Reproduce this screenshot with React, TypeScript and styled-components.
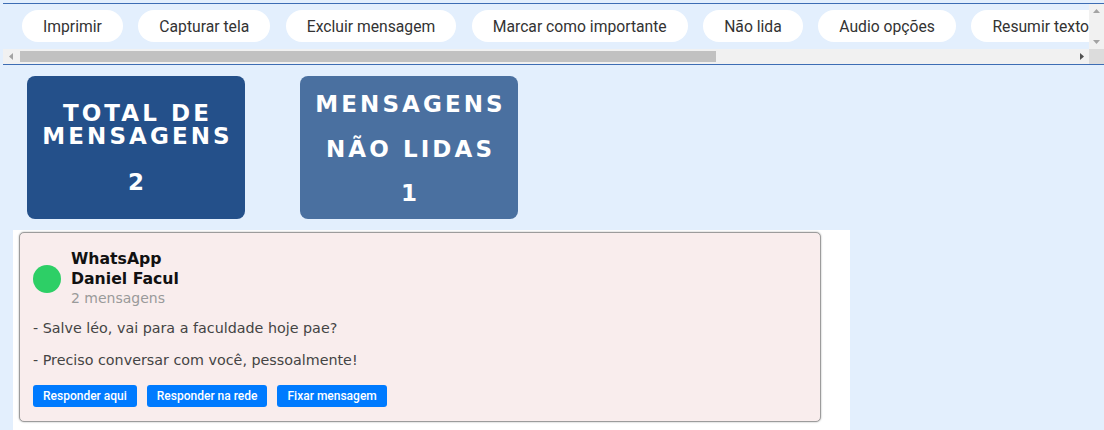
import React from "react";
import styled, { createGlobalStyle } from "styled-components";

const GlobalStyle = createGlobalStyle`
  html, body {
    margin: 0;
    padding: 0;
    background: #e3effd;
  }
  body {
    font-family: "DejaVu Sans", sans-serif;
  }
`;

const Page = styled.div`
  display: flex;
  flex-direction: column;
  min-height: 430px;
`;

/* ---------- toolbar with its (drawn) scrollbars ---------- */

const ToolbarFrame = styled.div`
  margin: 3px 0 0 3px;
  border-top: 1px solid #3d6db4;
  border-bottom: 1px solid #3d6db4;
  display: grid;
  grid-template-columns: 1fr 15px;
  grid-template-rows: 45px 15px;
`;

const Strip = styled.div`
  overflow: hidden;
  display: flex;
  align-items: flex-start;
  gap: 15.5px;
  padding: 6px 19px 0;
`;

const ToolButton = styled.button`
  flex-shrink: 0;
  height: 32px;
  padding: 0 21px;
  border: none;
  border-radius: 16px;
  background: #ffffff;
  color: #333333;
  font-family: Roboto, "Liberation Sans", sans-serif;
  font-size: 15.7px;
  white-space: nowrap;
  cursor: pointer;
`;

const VScroll = styled.div`
  background: #f1f1f1;
  display: flex;
  flex-direction: column;
  justify-content: space-between;
  align-items: center;
  padding: 5px 0;
`;

const HScroll = styled.div`
  background: #f1f1f1;
  display: flex;
  align-items: stretch;
`;

const ArrowCell = styled.div`
  width: 15px;
  flex-shrink: 0;
  display: flex;
  align-items: center;
  justify-content: center;
`;

const Track = styled.div`
  flex: 1;
  padding: 2px 0 2px 2px;
  display: flex;
`;

const Thumb = styled.div`
  background: #c1c1c1;
  height: 100%;
`;

const Corner = styled.div`
  background: #dcdcdc;
`;

type Dir = "up" | "down" | "left" | "right";
const arrowPoints: Record<Dir, string> = {
  up: "0,4 3.5,0 7,4",
  down: "0,0 3.5,4 7,0",
  left: "4,0 0,3.5 4,7",
  right: "0,0 4,3.5 0,7",
};

function Arrow({ dir, color }: { dir: Dir; color: string }) {
  const horiz = dir === "left" || dir === "right";
  return (
    <svg
      width={horiz ? 4 : 7}
      height={horiz ? 7 : 4}
      viewBox={horiz ? "0 0 4 7" : "0 0 7 4"}
    >
      <polygon points={arrowPoints[dir]} fill={color} />
    </svg>
  );
}

/* ---------- stats ---------- */

const StatsRow = styled.div`
  display: flex;
  gap: 55px;
  padding: 11px 0 0 27px;
`;

const StatCard = styled.div<{ $tone: string; $lift: number }>`
  width: 218px;
  height: 143px;
  box-sizing: border-box;
  padding: 0 0 ${(p) => p.$lift}px 3px;
  border-radius: 8px;
  background: ${(p) => p.$tone};
  color: #ffffff;
  display: flex;
  flex-direction: column;
  align-items: center;
  justify-content: center;
  text-align: center;
  font-family: "DejaVu Sans", sans-serif;
  font-weight: bold;
  font-size: 23px;
  letter-spacing: 3.1px;
`;

const StatTitle = styled.div<{ $lh: number }>`
  line-height: ${(p) => p.$lh}px;
`;

const StatValue = styled.div<{ $gap: number }>`
  margin-top: ${(p) => p.$gap}px;
  line-height: 24px;
`;

/* ---------- message panel ---------- */

const Panel = styled.div`
  margin: 11px 0 0 13px;
  width: 831px;
  background: #ffffff;
  padding: 2px 0 12px 6px;
  flex: 1;
`;

const MessageCard = styled.div`
  width: 774px;
  background: #f9eded;
  border: 1px solid #9c9c9c;
  box-shadow: 0 0 2px rgba(0, 0, 0, 0.35);
  border-radius: 5px;
  padding: 16px 13px 14px 13px;
`;

const Header = styled.div`
  display: flex;
  align-items: center;
  gap: 10px;
`;

const Avatar = styled.div`
  width: 28px;
  height: 28px;
  border-radius: 50%;
  background: #2dcf66;
`;

const HeaderText = styled.div`
  display: flex;
  flex-direction: column;
`;

const Strong = styled.div`
  font-weight: bold;
  font-size: 15.7px;
  line-height: 20px;
  color: #111111;
`;

const Muted = styled.div`
  font-size: 14px;
  line-height: 19px;
  color: #9a9a9a;
`;

const Lines = styled.div`
  margin-top: 11px;
  display: flex;
  flex-direction: column;
  gap: 14px;
`;

const Line = styled.p`
  margin: 0;
  font-size: 14.3px;
  line-height: 18px;
  color: #444444;
`;

const Actions = styled.div`
  display: flex;
  gap: 10px;
  margin-top: 16px;
`;

const ActionButton = styled.button`
  height: 22px;
  padding: 0 10px;
  border: none;
  border-radius: 3px;
  background: #007bff;
  color: #ffffff;
  font-family: Roboto, "Liberation Sans", sans-serif;
  font-weight: 500;
  font-size: 12px;
  cursor: pointer;
`;

const tools = [
  "Imprimir",
  "Capturar tela",
  "Excluir mensagem",
  "Marcar como importante",
  "Não lida",
  "Audio opções",
  "Resumir texto",
  "Traduzir",
  "Compartilhar",
  "Encaminhar",
  "Arquivar",
];

export default function App() {
  return (
    <>
      <GlobalStyle />
      <Page>
        <ToolbarFrame>
          <Strip>
            {tools.map((t) => (
              <ToolButton key={t}>{t}</ToolButton>
            ))}
          </Strip>
          <VScroll>
            <Arrow dir="up" color="#a3a3a3" />
            <Arrow dir="down" color="#a3a3a3" />
          </VScroll>
          <HScroll>
            <ArrowCell>
              <Arrow dir="left" color="#a3a3a3" />
            </ArrowCell>
            <Track>
              <Thumb style={{ width: "66%" }} />
            </Track>
            <ArrowCell>
              <Arrow dir="right" color="#505050" />
            </ArrowCell>
          </HScroll>
          <Corner />
        </ToolbarFrame>
        <StatsRow>
          <StatCard $tone="#24508a" $lift={0}>
            <StatTitle $lh={23}>
              TOTAL DE
              <br />
              MENSAGENS
            </StatTitle>
            <StatValue $gap={22}>2</StatValue>
          </StatCard>
          <StatCard $tone="#4a70a0" $lift={8}>
            <StatTitle $lh={45}>
              MENSAGENS
              <br />
              NÃO LIDAS
            </StatTitle>
            <StatValue $gap={9}>1</StatValue>
          </StatCard>
        </StatsRow>
        <Panel>
          <MessageCard>
            <Header>
              <Avatar />
              <HeaderText>
                <Strong>WhatsApp</Strong>
                <Strong>Daniel Facul</Strong>
                <Muted>2 mensagens</Muted>
              </HeaderText>
            </Header>
            <Lines>
              <Line>- Salve léo, vai para a faculdade hoje pae?</Line>
              <Line>- Preciso conversar com você, pessoalmente!</Line>
            </Lines>
            <Actions>
              <ActionButton>Responder aqui</ActionButton>
              <ActionButton>Responder na rede</ActionButton>
              <ActionButton>Fixar mensagem</ActionButton>
            </Actions>
          </MessageCard>
        </Panel>
      </Page>
    </>
  );
}
